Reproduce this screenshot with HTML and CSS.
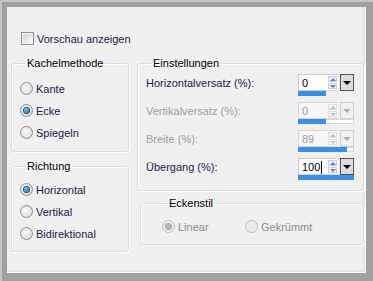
FILE: index.html
```html
<!DOCTYPE html>
<html lang="de">
<head>
    <meta charset="UTF-8">
    <title>Kacheln</title>
    <link rel="stylesheet" href="styles.css">
</head>
<body>
    <div class="frame">
        <div class="panel">
            <!-- Preview toggle -->
            <div class="check-row">
                <span class="checkbox"></span>
                <span>Vorschau anzeigen</span>
            </div>

            <div class="columns">
                <div class="col-left">
                    <fieldset class="group group-method">
                        <legend>Kachelmethode</legend>
                        <div class="radio"><span class="dot"></span>Kante</div>
                        <div class="radio"><span class="dot checked"></span>Ecke</div>
                        <div class="radio"><span class="dot"></span>Spiegeln</div>
                    </fieldset>
                    <fieldset class="group group-direction">
                        <legend>Richtung</legend>
                        <div class="radio"><span class="dot checked"></span>Horizontal</div>
                        <div class="radio"><span class="dot"></span>Vertikal</div>
                        <div class="radio"><span class="dot"></span>Bidirektional</div>
                    </fieldset>
                </div>

                <div class="col-right">
                    <fieldset class="group group-settings">
                        <legend>Einstellungen</legend>
                        <div class="field">
                            <span class="field-label">Horizontalversatz (%):</span>
                            <div class="spin">
                                <div class="spin-box">
                                    <span class="spin-value">0</span>
                                    <span class="arrows"><span class="up"></span><span class="down"></span></span>
                                    <span class="drop"></span>
                                </div>
                                <div class="bar"><span class="fill" style="width: 50%"></span></div>
                            </div>
                        </div>
                        <div class="field disabled">
                            <span class="field-label">Vertikalversatz (%):</span>
                            <div class="spin">
                                <div class="spin-box">
                                    <span class="spin-value">0</span>
                                    <span class="arrows"><span class="up"></span><span class="down"></span></span>
                                    <span class="drop"></span>
                                </div>
                                <div class="bar"><span class="fill" style="width: 50%"></span></div>
                            </div>
                        </div>
                        <div class="field disabled">
                            <span class="field-label">Breite (%):</span>
                            <div class="spin">
                                <div class="spin-box">
                                    <span class="spin-value">89</span>
                                    <span class="arrows"><span class="up"></span><span class="down"></span></span>
                                    <span class="drop"></span>
                                </div>
                                <div class="bar"><span class="fill" style="width: 88%"></span></div>
                            </div>
                        </div>
                        <div class="field">
                            <span class="field-label">Übergang (%):</span>
                            <div class="spin">
                                <div class="spin-box">
                                    <span class="spin-value">100<span class="caret"></span></span>
                                    <span class="arrows"><span class="up"></span><span class="down"></span></span>
                                    <span class="drop"></span>
                                </div>
                                <div class="bar"><span class="fill" style="width: 100%"></span></div>
                            </div>
                        </div>
                    </fieldset>

                    <fieldset class="group group-corner">
                        <legend>Eckenstil</legend>
                        <div class="corner-row">
                            <div class="radio disabled"><span class="dot checked"></span>Linear</div>
                            <div class="radio disabled"><span class="dot"></span>Gekrümmt</div>
                        </div>
                    </fieldset>
                </div>
            </div>
        </div>
    </div>
</body>
</html>
```

FILE: styles.css
```css
body {
    margin: 0;
    background: #a0a0a0;
    font-family: "Liberation Sans", Arial, sans-serif;
    font-size: 11px;
    color: #1b1b48;
}
.frame {
    width: 373px;
    height: 281px;
    box-sizing: border-box;
    padding: 7px 7px 8px 7px;
    background: #a0a0a0;
    box-shadow: inset 2px 2px 0 #c4c4c4;
}
.panel {
    height: 100%;
    box-sizing: border-box;
    background: #f0f0f0;
    padding: 25px 0 0 4px;
    box-shadow: inset -1px -1px 0 #fff, inset -3px -3px 0 #e4e4e4;
}
.check-row {
    display: flex;
    align-items: center;
    gap: 3px;
    margin-left: 10px;
    height: 13px;
}
.checkbox {
    width: 11px;
    height: 11px;
    border: 1px solid #8f8f8f;
    background: linear-gradient(135deg, #d6d6d6, #f6f6f6);
    box-shadow: inset 0 0 0 1px #f4f4f4;
}
.columns {
    display: flex;
    gap: 8px;
    margin-top: 12px;
}
.col-left {
    width: 118px;
    display: flex;
    flex-direction: column;
    gap: 8px;
}
.col-right {
    width: 227px;
    display: flex;
    flex-direction: column;
    gap: 6px;
}
.group {
    margin: 0;
    padding: 0;
    border: 1px solid #d5dfe5;
    border-radius: 3px;
    box-shadow: inset 1px 1px 0 #fff, 1px 1px 0 #fff;
    min-width: 0;
}
.group legend {
    padding: 0 2px;
    margin-left: 5px;
    color: #000;
    line-height: 13px;
}
.group-method, .group-direction {
    display: flex;
    flex-direction: column;
    gap: 9px;
    padding: 12px 0 12px 8px;
}
.group-direction {
    padding-top: 10px;
    padding-bottom: 11px;
}
.radio {
    display: flex;
    align-items: center;
    gap: 3px;
    height: 13px;
}
.dot {
    width: 11px;
    height: 11px;
    border: 1px solid #8e8f8f;
    border-radius: 50%;
    background: radial-gradient(circle at 40% 40%, #fafafa, #d4d4d4);
    display: flex;
    align-items: center;
    justify-content: center;
}
.dot.checked::after {
    content: "";
    width: 5px;
    height: 5px;
    border-radius: 50%;
    background: radial-gradient(circle at 40% 35%, #7cc4f4, #0f5a9c);
    box-shadow: 0 0 0 1px #1d4f7e;
}
.radio.disabled {
    color: #8d8d8d;
}
.radio.disabled .dot {
    border-color: #c0c0c0;
    background: #ececec;
}
.radio.disabled .dot.checked::after {
    background: #b8b8b8;
    box-shadow: 0 0 0 1px #a8a8a8;
}
.group-settings {
    display: flex;
    flex-direction: column;
    gap: 6px;
    padding: 4px 9px 10px 8px;
}
.field {
    display: flex;
    justify-content: space-between;
    align-items: flex-start;
    height: 22px;
}
.field-label {
    margin-top: 3px;
}
.field.disabled .field-label {
    color: #a0a0a0;
}
.spin {
    width: 56px;
}
.spin-box {
    height: 17px;
    display: flex;
    align-items: stretch;
}
.spin-value {
    flex: 1;
    box-sizing: border-box;
    background: #fff;
    border: 1px solid #c8cdd2;
    border-right: none;
    padding: 2px 0 0 3px;
    color: #000;
    font-size: 11px;
    display: flex;
    align-items: flex-start;
}
.caret {
    width: 1px;
    height: 13px;
    background: #000;
    margin-left: 1px;
}
.arrows {
    width: 10px;
    box-sizing: border-box;
    background: #fff;
    border-top: 1px solid #c8cdd2;
    border-bottom: 1px solid #c8cdd2;
    display: flex;
    flex-direction: column;
    padding: 1px 1px 1px 0;
    gap: 1px;
}
.arrows span {
    flex: 1;
    border: 1px solid #c6cfe0;
    background: #eef1f8;
    display: flex;
    align-items: center;
    justify-content: center;
}
.arrows .up::after {
    content: "";
    border: 3px solid transparent;
    border-bottom: 3px solid #6a78c8;
    border-top: 0;
}
.arrows .down::after {
    content: "";
    border: 3px solid transparent;
    border-top: 3px solid #6a78c8;
    border-bottom: 0;
}
.drop {
    width: 12px;
    margin-left: 2px;
    border: 1px solid #555;
    background: #dcdcdc;
    display: flex;
    align-items: center;
    justify-content: center;
}
.drop::after {
    content: "";
    border: 4px solid transparent;
    border-top: 4px solid #000;
    border-bottom: 0;
}
.bar {
    height: 5px;
    background: #f0f0f0;
}
.fill {
    display: block;
    height: 100%;
    background: #3c8fe4;
}
.field.disabled .spin-value {
    color: #9a9a9a;
    background: #f7f7f7;
    border-color: #d6d6d6;
}
.field.disabled .arrows {
    background: #f7f7f7;
    border-color: #d6d6d6;
}
.field.disabled .arrows span {
    border-color: #dedede;
    background: #f4f4f4;
}
.field.disabled .arrows .up::after {
    border-bottom-color: #c4c4c4;
}
.field.disabled .arrows .down::after {
    border-top-color: #c4c4c4;
}
.field.disabled .drop {
    border-color: #cfcfcf;
    background: #f0f0f0;
}
.field.disabled .drop::after {
    border-top-color: #b0b0b0;
}
.field.disabled .bar {
    background: #fff;
    box-shadow: inset 0 0 0 1px #d8d8d8;
}
.group-corner {
    margin-left: 3px;
    padding: 10px 0 11px 21px;
}
.corner-row {
    display: flex;
    gap: 27px;
}
.corner-row .radio:first-child {
    width: 56px;
}
```
